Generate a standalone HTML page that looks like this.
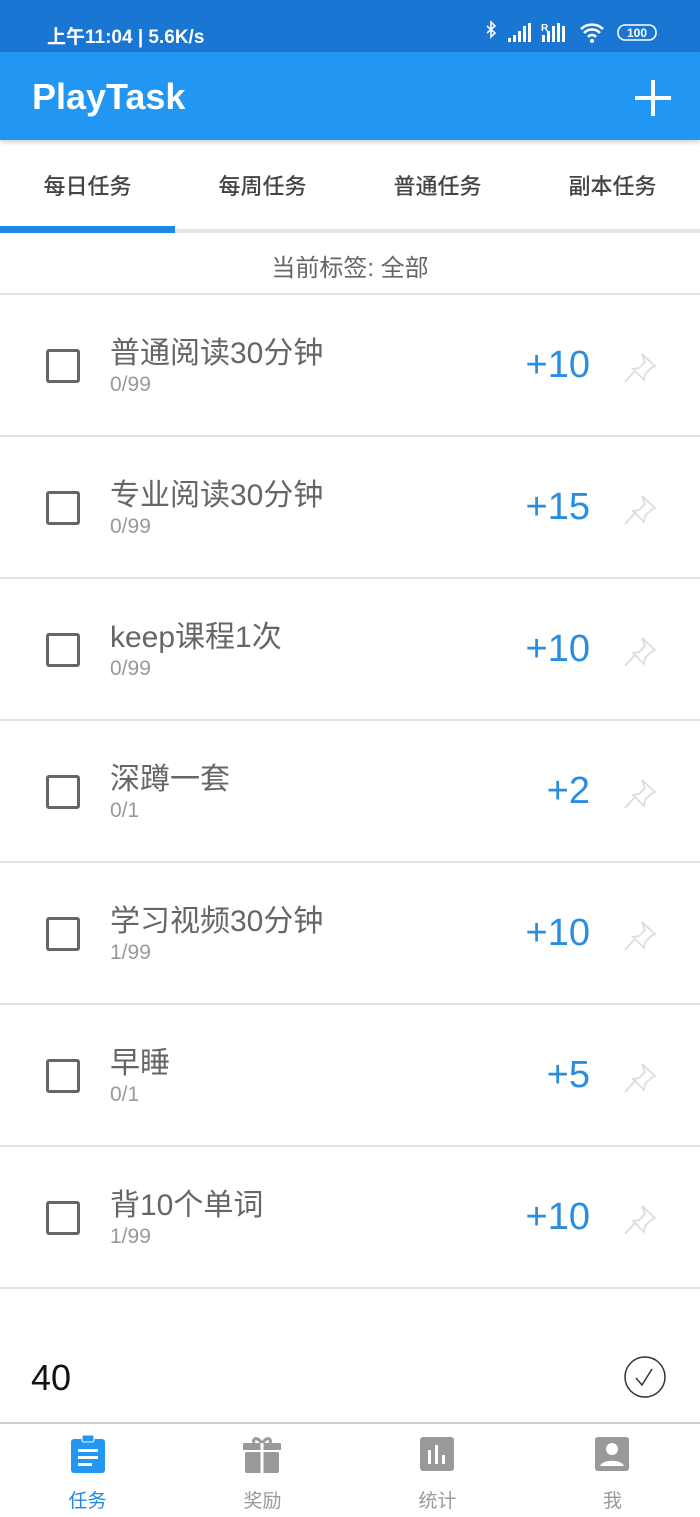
<!DOCTYPE html>
<html><head><meta charset="utf-8"><style>
*{margin:0;padding:0;box-sizing:border-box}
body{width:700px;height:1517px;overflow:hidden;background:#fff;font-family:"Liberation Sans","Noto Sans CJK SC",sans-serif;position:relative}
.abs{position:absolute}
.status{top:0;left:0;width:700px;height:52px;background:#1976d2;color:#fff}
.bar{top:52px;left:0;width:700px;height:88px;background:#2196f3;color:#fff;box-shadow:0 2px 5px rgba(0,0,0,.2)}
.tab{top:169px;width:175px;text-align:center;font-size:22px;color:#444;font-weight:500}
.row{left:0;width:700px;height:142px;border-bottom:2px solid #e2e2e2}
.cb{left:46px;top:54px;width:34px;height:34px;border:3px solid #666;border-radius:3px}
.t{left:110px;top:33px;font-size:30px;color:#666}
.s{left:110px;top:78px;font-size:21px;color:#999}
.p{right:110px;top:49px;font-size:38px;color:#2a8ee0}
.pin{left:622px;top:56px}
.nl{top:1486px;width:175px;text-align:center;font-size:19px;color:#999}
</style></head><body>
<div class="abs status">
<div class="abs" style="left:47px;top:22px;font-size:19px;font-weight:bold">上午11:04 | 5.6K/s</div>
<svg class="abs" style="left:484px;top:20px" width="175" height="26" viewBox="0 0 175 26">
<path d="M3 6l8 7-4 4V2l4 4-8 7" fill="none" stroke="#fff" stroke-width="1.6"/>
<rect x="24" y="18" width="3" height="4" fill="#fff"/><rect x="29" y="15" width="3" height="7" fill="#fff"/><rect x="34" y="11" width="3" height="11" fill="#fff"/><rect x="39" y="6" width="3" height="16" fill="#fff"/><rect x="44" y="3" width="3" height="19" fill="#fff"/>
<text x="57" y="11" font-size="10" fill="#fff" font-weight="bold">R</text>
<rect x="58" y="15" width="3" height="7" fill="#fff"/><rect x="63" y="11" width="3" height="11" fill="#fff"/><rect x="68" y="6" width="3" height="16" fill="#fff"/><rect x="73" y="3" width="3" height="19" fill="#fff"/><rect x="78" y="6" width="3" height="16" fill="#fff"/>
<path d="M97 9a16 16 0 0 1 22 0M100 13a11 11 0 0 1 16 0M104 17a5 5 0 0 1 8 0" fill="none" stroke="#fff" stroke-width="2.5"/><circle cx="108" cy="21" r="2" fill="#fff"/>
<rect x="134" y="5" width="38" height="15" rx="7" fill="none" stroke="#fff" stroke-width="1.6"/>
<text x="153" y="17" font-size="12" fill="#fff" text-anchor="middle" font-weight="bold">100</text>
</svg>
</div>
<div class="abs bar">
<div class="abs" style="left:32px;top:24px;font-size:36px;font-weight:bold">PlayTask</div>
<div class="abs" style="left:635px;top:44px;width:36px;height:4px;background:#fff"></div>
<div class="abs" style="left:651px;top:28px;width:4px;height:36px;background:#fff"></div>
</div>
<div class="abs tab" style="left:0">每日任务</div>
<div class="abs tab" style="left:175px">每周任务</div>
<div class="abs tab" style="left:350px">普通任务</div>
<div class="abs tab" style="left:525px">副本任务</div>
<div class="abs" style="left:0;top:229px;width:700px;height:4px;background:#e4e4e4"></div>
<div class="abs" style="left:0;top:226px;width:175px;height:7px;background:#1e88e5"></div>
<div class="abs" style="left:0;top:248px;width:700px;text-align:center;font-size:24px;color:#666">当前标签: 全部</div>
<div class="abs" style="left:0;top:293px;width:700px;height:2px;background:#e2e2e2"></div>

<div class="abs row" style="top:295px"><div class="abs cb"></div><div class="abs t">普通阅读30分钟</div><div class="abs s">0/99</div><div class="abs p">+10</div><svg class="abs pin" width="36" height="34" viewBox="0 0 36 34"><path d="M20 3l13 12-4 2-6 6-1 6-11-11 6-1 6-6zM13 20L3 31" fill="none" stroke="#ddd" stroke-width="1.8"/></svg></div>
<div class="abs row" style="top:437px"><div class="abs cb"></div><div class="abs t">专业阅读30分钟</div><div class="abs s">0/99</div><div class="abs p">+15</div><svg class="abs pin" width="36" height="34" viewBox="0 0 36 34"><path d="M20 3l13 12-4 2-6 6-1 6-11-11 6-1 6-6zM13 20L3 31" fill="none" stroke="#ddd" stroke-width="1.8"/></svg></div>
<div class="abs row" style="top:579px"><div class="abs cb"></div><div class="abs t">keep课程1次</div><div class="abs s">0/99</div><div class="abs p">+10</div><svg class="abs pin" width="36" height="34" viewBox="0 0 36 34"><path d="M20 3l13 12-4 2-6 6-1 6-11-11 6-1 6-6zM13 20L3 31" fill="none" stroke="#ddd" stroke-width="1.8"/></svg></div>
<div class="abs row" style="top:721px"><div class="abs cb"></div><div class="abs t">深蹲一套</div><div class="abs s">0/1</div><div class="abs p">+2</div><svg class="abs pin" width="36" height="34" viewBox="0 0 36 34"><path d="M20 3l13 12-4 2-6 6-1 6-11-11 6-1 6-6zM13 20L3 31" fill="none" stroke="#ddd" stroke-width="1.8"/></svg></div>
<div class="abs row" style="top:863px"><div class="abs cb"></div><div class="abs t">学习视频30分钟</div><div class="abs s">1/99</div><div class="abs p">+10</div><svg class="abs pin" width="36" height="34" viewBox="0 0 36 34"><path d="M20 3l13 12-4 2-6 6-1 6-11-11 6-1 6-6zM13 20L3 31" fill="none" stroke="#ddd" stroke-width="1.8"/></svg></div>
<div class="abs row" style="top:1005px"><div class="abs cb"></div><div class="abs t">早睡</div><div class="abs s">0/1</div><div class="abs p">+5</div><svg class="abs pin" width="36" height="34" viewBox="0 0 36 34"><path d="M20 3l13 12-4 2-6 6-1 6-11-11 6-1 6-6zM13 20L3 31" fill="none" stroke="#ddd" stroke-width="1.8"/></svg></div>
<div class="abs row" style="top:1147px"><div class="abs cb"></div><div class="abs t">背10个单词</div><div class="abs s">1/99</div><div class="abs p">+10</div><svg class="abs pin" width="36" height="34" viewBox="0 0 36 34"><path d="M20 3l13 12-4 2-6 6-1 6-11-11 6-1 6-6zM13 20L3 31" fill="none" stroke="#ddd" stroke-width="1.8"/></svg></div>

<div class="abs" style="left:31px;top:1357px;font-size:36px;color:#111">40</div>
<svg class="abs" style="left:622px;top:1354px" width="46" height="46" viewBox="0 0 46 46"><circle cx="23" cy="23" r="20" fill="none" stroke="#333" stroke-width="1.5"/><path d="M14 24l6 7 10-16" fill="none" stroke="#333" stroke-width="1.5"/></svg>
<div class="abs" style="left:0;top:1422px;width:700px;height:2px;background:#ccc"></div>

<svg class="abs" style="left:70px;top:1434px" width="36" height="40" viewBox="0 0 36 40"><rect x="1" y="5" width="34" height="34" rx="3" fill="#2196f3"/><rect x="12" y="1" width="12" height="7" rx="2" fill="#2196f3" stroke="#fff" stroke-width="1"/><rect x="8" y="15" width="20" height="3" fill="#fff"/><rect x="8" y="22" width="20" height="3" fill="#fff"/><rect x="8" y="29" width="14" height="3" fill="#fff"/></svg>
<svg class="abs" style="left:242px;top:1434px" width="40" height="40" viewBox="0 0 40 40"><path d="M20 10C16 2 10 4 12 9M20 10c4-8 10-6 8-1" fill="none" stroke="#999" stroke-width="3"/><rect x="1" y="9" width="38" height="7" rx="1" fill="#999"/><rect x="3" y="18" width="34" height="21" rx="2" fill="#999"/><rect x="18.5" y="9" width="3" height="30" fill="#fff"/></svg>
<svg class="abs" style="left:420px;top:1437px" width="36" height="36" viewBox="0 0 36 36"><rect width="34" height="34" rx="3" fill="#999"/><rect x="8" y="13" width="3" height="14" fill="#fff"/><rect x="15" y="8" width="3" height="19" fill="#fff"/><rect x="22" y="18" width="3" height="9" fill="#fff"/></svg>
<svg class="abs" style="left:595px;top:1437px" width="36" height="36" viewBox="0 0 36 36"><rect width="34" height="34" rx="3" fill="#999"/><circle cx="17" cy="12" r="6" fill="#fff"/><path d="M5 29c2-7 22-7 24 0z" fill="#fff"/></svg>
<div class="abs nl" style="left:0;color:#1e88e5">任务</div>
<div class="abs nl" style="left:175px">奖励</div>
<div class="abs nl" style="left:350px">统计</div>
<div class="abs nl" style="left:525px">我</div>
</body></html>
